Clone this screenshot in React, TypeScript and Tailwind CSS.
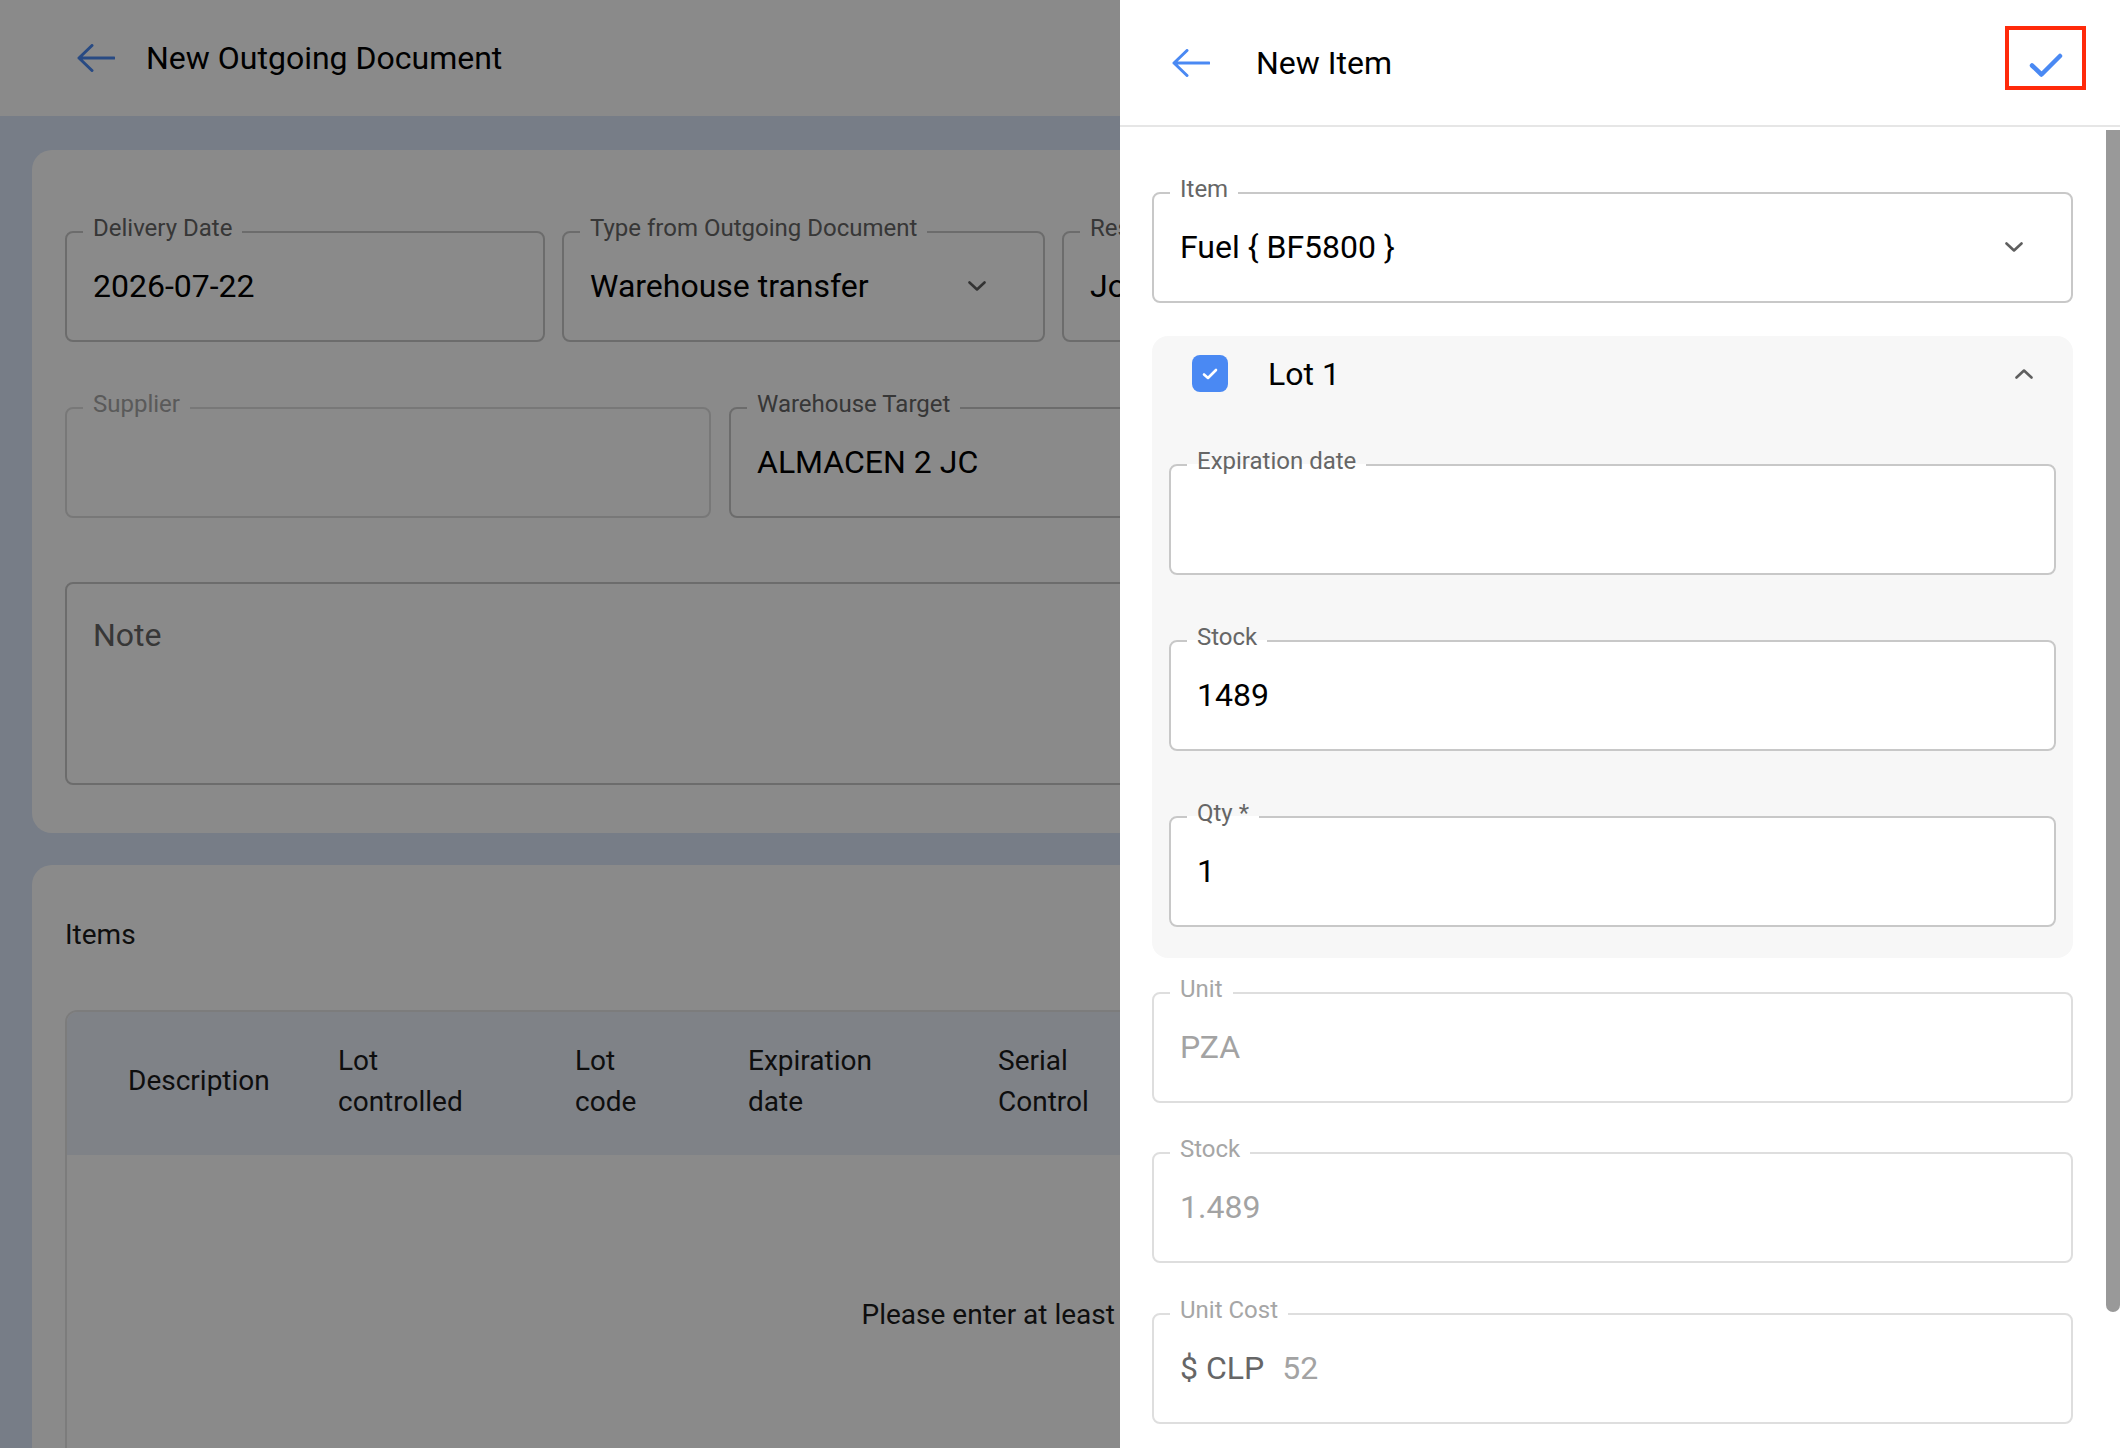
import React from 'react';
import clsx from 'clsx';

const BLUE = '#4a89f3';

const BackArrow = ({ color = BLUE }: { color?: string }) => (
  <svg width="38" height="28" viewBox="0 0 38 28" fill="none" stroke={color} strokeWidth="3" strokeLinecap="round" strokeLinejoin="round">
    <path d="M15 1.5 2 14l13 12.5M2 14h35" />
  </svg>
);

const Chevron = ({ up = false }: { up?: boolean }) => (
  <svg width="18" height="10" viewBox="0 0 18 10" fill="none" stroke="#5f5f5f" strokeWidth="2.6" strokeLinecap="round" strokeLinejoin="round">
    {up ? <path d="M1.5 8.5 9 1.5l7.5 7" /> : <path d="M1.5 1.5 9 8.5l7.5-7" />}
  </svg>
);

interface FieldProps {
  label: string;
  value?: React.ReactNode;
  disabled?: boolean;
  chevron?: boolean;
  className?: string;
}

const Field: React.FC<FieldProps> = ({ label, value, disabled, chevron, className }) => {
  return (
    <fieldset
      className={clsx(
        'min-w-0 rounded-[8px] border-2 bg-white pl-[26px] pr-[48px] pt-[22px] pb-[34px]',
        disabled ? 'border-[#dedede]' : 'border-[#c8c8c8]',
        className
      )}
    >
      <legend
        className={clsx(
          'ml-[-10px] px-[10px] text-[24px] leading-[24px]',
          disabled ? 'text-[#a6a6a6]' : 'text-[#666666]'
        )}
      >
        <span className="relative top-[-4px]">{label}</span>
      </legend>
      <div
        className={clsx(
          'flex h-[40px] items-center whitespace-nowrap text-[32px] leading-[40px]',
          disabled ? 'text-[#a3a3a3]' : 'text-black'
        )}
      >
        <div className="min-w-0 flex-1 overflow-hidden">{value ?? '\u00a0'}</div>
        {chevron && <Chevron />}
      </div>
    </fieldset>
  );
};

const OutgoingDocument = () => {
  const columns: [string, number][] = [
    ['Description', 210],
    ['Lot controlled', 237],
    ['Lot code', 173],
    ['Expiration date', 250],
    ['Serial Control', 230],
    ['Qty', 200],
    ['Unit Cost', 200],
  ];

  return (
    <div className="min-h-screen w-[2120px] bg-[#dce7fa]">
      {/* Page header */}
      <div className="flex h-[116px] items-center bg-white pl-[77px]">
        <BackArrow />
        <span className="ml-[31px] text-[32px] leading-[40px] text-black">New Outgoing Document</span>
      </div>

      {/* General card */}
      <div className="mx-[32px] mt-[34px] rounded-[20px] bg-white px-[33px] pt-[70px] pb-[48px]">
        <div className="grid grid-cols-[480px_483px_483px_1fr] gap-x-[17px]">
          <Field label="Delivery Date" value="2026-07-22" />
          <Field label="Type from Outgoing Document" value="Warehouse transfer" chevron className="pr-[57px]" />
          <Field label="Responsible" value="Jorge Carrasco" chevron />
          <Field label="Warehouse Source" value="ALMACEN 1 JC" chevron />
        </div>
        <div className="mt-[54px] grid grid-cols-[646px_646px_1fr] gap-x-[18px]">
          <Field label="Supplier" disabled />
          <Field label="Warehouse Target" value="ALMACEN 2 JC" chevron />
          <Field label="Reference" />
        </div>
        <div className="mt-[64px] h-[203px] rounded-[8px] border-2 border-[#c8c8c8] pl-[26px] pt-[31px] text-[32px] leading-[40px] text-[#666666]">
          Note
        </div>
      </div>

      {/* Items card */}
      <div className="mx-[32px] mt-[32px] rounded-t-[20px] bg-white px-[33px] pt-[50px]">
        <div className="text-[28px] leading-[40px] text-[#1a1a1a]">Items</div>
        <div className="mt-[55px] overflow-hidden rounded-t-[12px] border-2 border-b-0 border-[#e6e6e6]">
          <div className="flex h-[143px] items-center bg-[#ebf0fa] pb-[6px] pl-[61px] text-[28px] leading-[41px] text-[#1a1a1a]">
            {columns.map(([name, w]) => (
              <div key={name} className="shrink-0 pr-[20px]" style={{ width: w }}>
                {name.includes(' ') ? (
                  <>
                    {name.split(' ')[0]}
                    <br />
                    {name.split(' ').slice(1).join(' ')}
                  </>
                ) : (
                  name
                )}
              </div>
            ))}
          </div>
          <div className="h-[400px] pt-[140px] pr-[28px] text-center text-[28px] leading-[40px] text-[#1a1a1a]">
            Please enter at least one item
          </div>
        </div>
      </div>
    </div>
  );
};

const NewItemDrawer = () => {
  return (
    <div className="absolute right-0 top-0 flex h-full w-[1000px] flex-col bg-white">
      {/* Drawer header */}
      <div className="flex h-[127px] shrink-0 items-center border-b-2 border-[#e6e6e6] pl-[52px] pr-[34px]">
        <BackArrow />
        <span className="ml-[46px] text-[32px] leading-[40px] text-black">New Item</span>
        <button className="ml-auto mt-[26px] flex h-[64px] w-[81px] items-center justify-center self-start border-4 border-[#ff2a0a] pt-[13px]">
          <svg width="34" height="24" viewBox="0 0 34 24" fill="none" stroke={BLUE} strokeWidth="4.5" strokeLinecap="round" strokeLinejoin="round">
            <path d="M3 12.5 12.5 21.5 31 3" />
          </svg>
        </button>
      </div>

      {/* Drawer body */}
      <div className="flex min-h-0 flex-1 overflow-hidden">
        <div className="flex-1 pl-[32px] pr-[33px] pt-[54px]">
          <Field label="Item" value="Fuel { BF5800 }" chevron />

          <div className="mt-[33px] rounded-[16px] bg-[#f7f7f7] px-[17px] pt-[19px] pb-[31px]">
            <div className="flex h-[37px] items-center pl-[23px] pr-[23px]">
              <div className="flex h-[37px] w-[36px] items-center justify-center rounded-[8px] bg-[#4a89f3]">
                <svg width="16" height="12" viewBox="0 0 16 12" fill="none" stroke="white" strokeWidth="2.6" strokeLinecap="round" strokeLinejoin="round">
                  <path d="M2 6.5 6 10l8-8" />
                </svg>
              </div>
              <span className="ml-[40px] text-[32px] leading-[40px] text-black">Lot 1</span>
              <div className="ml-auto">
                <Chevron up />
              </div>
            </div>
            <Field label="Expiration date" className="mt-[61px]" />
            <Field label="Stock" value="1489" className="mt-[54px]" />
            <Field label="Qty *" value="1" className="mt-[54px]" />
          </div>

          <Field label="Unit" value="PZA" disabled className="mt-[23px]" />
          <Field label="Stock" value="1.489" disabled className="mt-[38px]" />
          <Field
            label="Unit Cost"
            disabled
            className="mt-[39px]"
            value={
              <span>
                <span className="text-[#666666]">$ CLP</span>
                <span className="ml-[18px]">52</span>
              </span>
            }
          />
        </div>
        {/* scrollbar */}
        <div className="w-[14px] shrink-0 pt-[3px]">
          <div className="h-[1182px] rounded-b-full bg-[#999999]" />
        </div>
      </div>
    </div>
  );
};

export default function App() {
  return (
    <div className="relative h-[1448px] w-[2120px] overflow-hidden font-['Roboto','Liberation_Sans',sans-serif]">
      <OutgoingDocument />
      <div className="absolute inset-0 bg-black/[0.46]" />
      <NewItemDrawer />
    </div>
  );
}
